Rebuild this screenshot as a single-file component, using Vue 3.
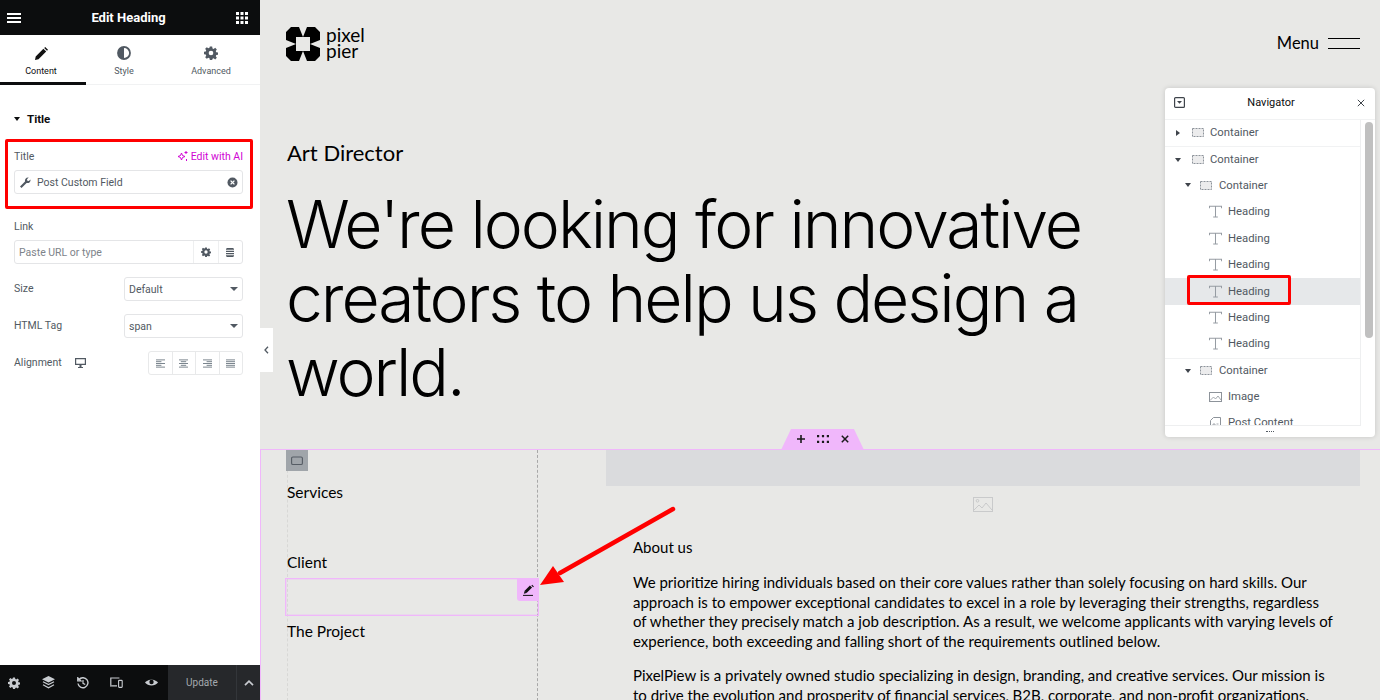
<template>
  <div class="page">
    <aside class="panel">
      <div class="topbar">
        <svg class="top-icon" width="14" height="12" viewBox="0 0 14 12"><path d="M0 1h14v2H0zM0 5h14v2H0zM0 9h14v2H0z" fill="#fff" /></svg>
        <span class="top-title">Edit Heading</span>
        <svg class="top-icon" width="12" height="12" viewBox="0 0 12 12"><path d="M0 0h3v3H0zM4.500 0h3v3h-3zM9 0h3v3H9zM0 4.500h3v3H0zM4.500 4.500h3v3h-3zM9 4.500h3v3H9zM0 9h3v3H0zM4.500 9h3v3h-3zM9 9h3v3H9z" fill="#fff" /></svg>
      </div>

      <div class="tabs">
        <div class="tab tab-active">
          <svg width="13" height="13" viewBox="0 0 13 13"><path d="M0 13l.7-3.500L8.400 1.800l2.800 2.800-7.700 7.700zM9.200 1l1-1 2.800 2.800-1 1z" fill="#111" /></svg>
          <span>Content</span>
        </div>
        <div class="tab tab-style">
          <svg width="14" height="14" viewBox="0 0 14 14"><circle cx="7" cy="7" r="6" fill="none" stroke="#515962" stroke-width="1.800" /><path d="M7 1a6 6 0 0 0 0 12z" fill="#515962" /></svg>
          <span>Style</span>
        </div>
        <div class="tab tab-adv">
          <svg width="14" height="14" viewBox="0 0 24 24"><path :d="gearPath" fill="#515962" fill-rule="evenodd" /></svg>
          <span>Advanced</span>
        </div>
      </div>

      <div class="controls">
        <div class="section-title"><span class="caret"></span>Title</div>

        <div class="title-box">
          <div class="label-row">
            <span class="label">Title</span>
            <span class="ai">
              <svg width="11" height="11" viewBox="0 0 11 11"><path d="M4.500 2l1 2.500L8 5.500l-2.500 1-1 2.500-1-2.500L1 5.500l2.500-1z" fill="none" stroke="#d004d4" stroke-width="1" /><path d="M8.500 0h1v1h1v1h-1v1h-1V2h-1V1h1zM9 8h1v2H9z" fill="#d004d4" /></svg>
              Edit with AI
            </span>
          </div>
          <div class="input dyn">
            <svg width="11" height="11" viewBox="0 0 11 11"><path d="M0 9.600L5 4.600C4.500 2.500 6.200.2 8.700.6L7 2.300l.3 1.500 1.500.3L10.500 2.400c.4 2.500-1.800 4.100-3.900 3.600L1.500 11z" fill="#515962" /></svg>
            <span>Post Custom Field</span>
            <svg class="clear" width="11" height="11" viewBox="0 0 11 11"><circle cx="5.500" cy="5.500" r="5" fill="#515962" /><path d="M3.600 3.600l3.800 3.800M7.400 3.600L3.600 7.400" stroke="#fff" stroke-width="1.300" /></svg>
          </div>
        </div>

        <div class="label link-label">Link</div>
        <div class="input link-input">
          <span class="placeholder">Paste URL or type</span>
          <span class="addon">
            <svg width="10" height="10" viewBox="0 0 24 24"><path :d="gearPath" fill="#515962" fill-rule="evenodd" /></svg>
          </span>
          <span class="addon">
            <svg width="8" height="9" viewBox="0 0 9 10"><path d="M1 0h7l1 1v1H0V1zM0 3h9v1.500H0zM0 5.500h9V7H0zM0 8h9v1l-1 1H1L0 9z" fill="#515962" /></svg>
          </span>
        </div>

        <div class="row">
          <span class="label">Size</span>
          <div class="select">Default<span class="select-caret"></span></div>
        </div>
        <div class="row">
          <span class="label">HTML Tag</span>
          <div class="select">span<span class="select-caret"></span></div>
        </div>
        <div class="row">
          <span class="label align-label">
            Alignment
            <svg width="11" height="10" viewBox="0 0 11 10"><path d="M.6.600h9.800v5.800H.6z" fill="none" stroke="#515962" stroke-width="1.200" /><path d="M4.500 7h2v2H8v1H3V9h1.500z" fill="#515962" /></svg>
          </span>
          <div class="aligns">
            <span v-for="a in aligns" :key="a.key" class="align-btn">
              <svg width="9" height="9" viewBox="0 0 10 9">
                <path v-for="(w, i) in a.bars" :key="i" :d="alignBar(w, a.key, i)" fill="#6d7882" />
              </svg>
            </span>
          </div>
        </div>
      </div>

      <div class="footer">
        <div class="foot-icons">
          <svg width="12" height="12" viewBox="0 0 24 24"><path :d="gearPath" fill="#c8cbd0" fill-rule="evenodd" /></svg>
          <svg width="13" height="13" viewBox="0 0 13 13"><path d="M6.500 0L13 3.200 6.500 6.500 0 3.200z" fill="#c8cbd0" /><path d="M1 5.800l5.500 2.800L12 5.800M1 8.800l5.500 2.900L12 8.800" fill="none" stroke="#c8cbd0" stroke-width="1.200" /></svg>
          <svg width="12" height="12" viewBox="0 0 12 12"><path d="M2 2.600A5 5 0 1 1 1 6.500" fill="none" stroke="#c8cbd0" stroke-width="1.400" /><path d="M.7 .6v3.300H4zM6 3v3.300l2.200 1.300" fill="none" stroke="#c8cbd0" stroke-width="1.200" /></svg>
          <svg width="13" height="11" viewBox="0 0 13 11"><path d="M.8 8V1h8.600M0 8.800h7" fill="none" stroke="#c8cbd0" stroke-width="1.200" /><rect x="8.600" y="3.400" width="3.600" height="7" rx=".6" fill="none" stroke="#c8cbd0" stroke-width="1.100" /></svg>
          <svg width="13" height="9" viewBox="0 0 13 9"><path d="M0 4.500C3 .5 10 .5 13 4.500 10 8.500 3 8.500 0 4.500z" fill="#c8cbd0" /><circle cx="6.500" cy="4" r="2.200" fill="#0c0d0e" /><path d="M1.500 2.800Q6.500-.8 11.500 2.800" fill="none" stroke="#0c0d0e" stroke-width=".6" /></svg>
        </div>
        <div class="update">Update</div>
        <div class="foot-more">
          <svg width="10" height="6" viewBox="0 0 10 6"><path d="M1 5.200l4-4 4 4" fill="none" stroke="#c8cbd0" stroke-width="1.700" /></svg>
        </div>
      </div>

      <div class="collapse">
        <svg width="5" height="8" viewBox="0 0 5 8"><path d="M4 .8L1 4l3 3.200" fill="none" stroke="#515962" stroke-width="1.300" /></svg>
      </div>
    </aside>

    <main class="canvas">
      <header class="site-head">
        <div class="logo">
          <svg width="34" height="34" viewBox="0 0 34 34">
            <path fill="#000" d="M5 0h8l4 10 4-10h8l5 5v8l-10 4 10 4v8l-5 5h-8l-4-10-4 10H5l-5-5v-8l10-4-10-4V5z" />
            <rect x="10" y="10" width="14" height="14" fill="#e8e8e6" />
          </svg>
          <span class="logo-text">pixel<br />pier</span>
        </div>
        <div class="menu">
          <span>Menu</span>
          <span class="burger"></span>
        </div>
      </header>

      <section class="hero">
        <div class="role">Art Director</div>
        <h1>We're looking for innovative<br />creators to help us design a<br />world.</h1>
      </section>

      <section class="lower">
        <div class="handle">
          <svg width="8" height="8" viewBox="0 0 8 8"><path d="M3.200 0h1.600v3.200H8v1.600H4.800V8H3.200V4.800H0V3.200h3.200z" fill="#1a1a1a" /></svg>
          <svg width="12" height="8" viewBox="0 0 12 8"><path d="M0 0h2.200v2.200H0zM4.900 0h2.200v2.200H4.900zM9.800 0H12v2.200H9.800zM0 5.800h2.200V8H0zM4.900 5.800h2.200V8H4.900zM9.800 5.800H12V8H9.800z" fill="#1a1a1a" /></svg>
          <svg width="8" height="8" viewBox="0 0 8 8"><path d="M.8.800l6.400 6.400M7.200.800L.8 7.200" stroke="#1a1a1a" stroke-width="1.500" /></svg>
        </div>

        <div class="col-left">
          <span class="col-badge">
            <svg width="12" height="10" viewBox="0 0 12 10"><rect x=".6" y="1" width="10.800" height="7.500" rx="1.300" fill="none" stroke="#555c64" stroke-width="1.100" /></svg>
          </span>
          <div class="meta meta-services">Services</div>
          <div class="meta meta-client">Client</div>
          <div class="selected">
            <span class="edit-btn">
              <svg width="11" height="12" viewBox="0 0 11 12"><path d="M2.500 8L8 2.500" stroke="#111" stroke-width="3" /><path d="M.8 9.800l.9-2.700 1.800 1.800zM8.400 1.500L9.200.7l1.700 1.700-.8.800z" fill="#111" /><path d="M0 11.400h10" stroke="#111" stroke-width="1" /></svg>
            </span>
          </div>
          <div class="meta meta-project">The Project</div>
        </div>

        <div class="col-right">
          <div class="img-bar"></div>
          <div class="img-holder">
            <svg width="20" height="15" viewBox="0 0 20 15"><rect x=".5" y=".5" width="19" height="14" fill="none" stroke="#c9cacb" /><circle cx="4.500" cy="3.800" r="1.300" fill="none" stroke="#c9cacb" /><path d="M1 13l5-5 3 3 4-5 6 7" fill="none" stroke="#c9cacb" /></svg>
          </div>
          <div class="about">
            <h2>About us</h2>
            <p>We prioritize hiring individuals based on their core values rather than solely focusing on hard skills. Our<br />approach is to empower exceptional candidates to excel in a role by leveraging their strengths, regardless<br />of whether they precisely match a job description. As a result, we welcome applicants with varying levels of<br />experience, both exceeding and falling short of the requirements outlined below.</p>
            <p>PixelPiew is a privately owned studio specializing in design, branding, and creative services. Our mission is<br />to drive the evolution and prosperity of financial services, B2B, corporate, and non-profit organizations.</p>
          </div>
        </div>
      </section>

      <div class="navigator">
        <div class="nav-head">
          <svg width="11" height="11" viewBox="0 0 11 11"><rect x=".6" y=".6" width="9.800" height="9.800" rx="1" fill="none" stroke="#3f444b" stroke-width="1.200" /><path d="M3 4h5L5.500 6.800z" fill="#3f444b" /></svg>
          <span>Navigator</span>
          <svg width="8" height="8" viewBox="0 0 8 8"><path d="M.8.800l6.400 6.400M7.200.800L.8 7.200" stroke="#3f444b" stroke-width="1" /></svg>
        </div>
        <div class="nav-body">
          <div class="nav-list">
            <div
              v-for="(item, i) in navItems"
              :key="i"
              class="nav-row"
              :class="{ 'nav-active': item.active, 'nav-sep': item.sep, 'nav-nested': item.indent === 20 }"
              :style="{ paddingLeft: item.indent + 'px' }"
            >
              <span v-if="item.arrow" class="nav-arrow" :class="item.arrow"></span>
              <svg v-if="item.type === 'box'" class="nav-icon" width="12" height="9" viewBox="0 0 12 9"><rect x=".5" y=".5" width="11" height="8" fill="#ececed" stroke="#8d939a" stroke-dasharray="2 1" /></svg>
              <svg v-else-if="item.type === 'text'" class="nav-icon" width="13" height="13" viewBox="0 0 14 13"><path d="M.5 3V.8h13V3M7 .8v11.700M4.500 12.500h5" fill="none" stroke="#969ca3" stroke-width="1.100" /></svg>
              <svg v-else-if="item.type === 'image'" class="nav-icon" width="13" height="10" viewBox="0 0 13 10"><rect x=".5" y=".5" width="12" height="9" fill="none" stroke="#8d939a" /><path d="M1 8.500L4.500 5l2 2L9 4l3 4" fill="none" stroke="#8d939a" stroke-width=".8" /></svg>
              <svg v-else class="nav-icon" width="13" height="12" viewBox="0 0 11 12"><path d="M3.500.5h7v11H.5V3.500z" fill="none" stroke="#8d939a" /><path d="M3 7h2v2H3zM6.500 7h2M6.500 9h2" stroke="#8d939a" stroke-width=".8" fill="none" /></svg>
              <span>{{ item.label }}</span>
              <span v-if="item.active" class="nav-mark"></span>
            </div>
          </div>
          <div class="nav-track"><span class="nav-thumb"></span></div>
        </div>
        <div class="nav-foot"><span class="nav-grip"></span></div>
      </div>

      <svg class="arrow" width="150" height="90" viewBox="0 0 150 90">
        <path d="M133 4L20 68" stroke="#f00" stroke-width="4.500" stroke-linecap="round" />
        <path d="M0 80L13 61 24 77z" fill="#f00" />
      </svg>
    </main>
  </div>
</template>

<script setup>
const gearPath =
  'M10 1h4l.6 3.200 1.900.8 2.700-1.800 2.800 2.800L20.200 8.700l.8 1.900 3 .4v4l-3 .6-.8 1.900 1.800 2.700-2.800 2.800-2.700-1.800-1.900.8L14 24h-4l-.6-3-1.900-.8L4.800 22 2 19.200l1.800-2.700-.8-1.900L0 14v-4l3-.6.8-1.900L2 4.800 4.800 2l2.700 1.800 1.900-.8zM12 8a4 4 0 1 0 0 8 4 4 0 0 0 0-8z'

const aligns = [
  { key: 'left', bars: [10, 6, 10, 6, 10] },
  { key: 'center', bars: [10, 6, 10, 6, 10] },
  { key: 'right', bars: [10, 6, 10, 6, 10] },
  { key: 'justify', bars: [10, 10, 10, 10, 10] },
]

function alignBar(w, key, i) {
  const y = i * 2
  let x = 0
  if (key === 'center') x = (10 - w) / 2
  if (key === 'right') x = 10 - w
  return `M${x} ${y}h${w}v1h-${w}z`
}

const navItems = [
  { label: 'Container', type: 'box', indent: 11, arrow: 'right' },
  { label: 'Container', type: 'box', indent: 10, arrow: 'down', sep: true },
  { label: 'Container', type: 'box', indent: 20, arrow: 'down' },
  { label: 'Heading', type: 'text', indent: 44 },
  { label: 'Heading', type: 'text', indent: 44 },
  { label: 'Heading', type: 'text', indent: 44 },
  { label: 'Heading', type: 'text', indent: 44, active: true },
  { label: 'Heading', type: 'text', indent: 44 },
  { label: 'Heading', type: 'text', indent: 44 },
  { label: 'Container', type: 'box', indent: 20, arrow: 'down', sep: true },
  { label: 'Image', type: 'image', indent: 44 },
  { label: 'Post Content', type: 'post', indent: 44 },
]
</script>

<style>
html,
body {
  margin: 0;
  overflow: hidden;
}
</style>

<style scoped>
.page {
  display: flex;
  width: 1380px;
  height: 700px;
  overflow: hidden;
  font-family: 'Roboto', 'Liberation Sans', sans-serif;
  background: #e8e8e6;
}

/* left editor panel */
.panel {
  position: relative;
  flex: 0 0 260px;
  min-width: 0;
  display: flex;
  flex-direction: column;
  background: #fff;
}

.topbar {
  display: flex;
  align-items: center;
  justify-content: space-between;
  height: 35px;
  padding: 0 12px 0 7px;
  background: #0c0d0e;
  color: #fff;
}

.top-title {
  font-size: 13px;
  font-weight: 700;
}

.tabs {
  display: flex;
  height: 50px;
  border-bottom: 1px solid #f1f2f3;
  box-sizing: border-box;
}

.tab {
  display: flex;
  flex-direction: column;
  align-items: center;
  justify-content: flex-end;
  gap: 6px;
  padding-bottom: 8px;
  box-sizing: border-box;
  font-size: 9px;
  color: #515962;
}

.tab-active {
  width: 86px;
  height: 50px;
  padding-right: 4px;
  padding-bottom: 9px;
  color: #0c0d0e;
  box-shadow: inset 0 -3px 0 #0c0d0e;
}

.tab-style {
  width: 76px;
}

.tab-adv {
  width: 98px;
}

.controls {
  flex: 1;
  min-width: 0;
  padding: 0 17px 0 14px;
}

.section-title {
  display: flex;
  align-items: center;
  gap: 7px;
  margin-top: 27px;
  height: 14px;
  font-size: 11.500px;
  font-weight: 700;
  color: #0c0d0e;
}

.caret {
  width: 0;
  height: 0;
  border: 3.500px solid transparent;
  border-top: 4px solid #0c0d0e;
  border-bottom: 0;
}

.title-box {
  margin: 13px -10px 0 -9px;
  width: 248px;
  height: 70px;
  box-sizing: border-box;
  border: 3px solid #f00;
  border-radius: 2px;
  padding: 7px 7px 0 6px;
}

.label-row {
  display: flex;
  justify-content: space-between;
  align-items: center;
  height: 14px;
}

.label {
  font-size: 10.500px;
  color: #515962;
}

.ai {
  display: flex;
  align-items: center;
  gap: 3px;
  font-size: 10.500px;
  color: #d004d4;
}

.input {
  display: flex;
  align-items: center;
  height: 24px;
  box-sizing: border-box;
  border: 1px solid #e4e5e7;
  border-radius: 3px;
  font-size: 10.500px;
  color: #515962;
}

.dyn {
  margin-top: 7px;
  padding: 0 4px 0 5px;
  gap: 6px;
}

.clear {
  margin-left: auto;
}

.link-label {
  margin-top: 11px;
  height: 14px;
  line-height: 14px;
}

.link-input {
  margin-top: 6px;
}

.placeholder {
  flex: 1;
  padding-left: 4px;
  color: #7d838a;
}

.addon {
  display: flex;
  align-items: center;
  justify-content: center;
  width: 24.500px;
  height: 100%;
  border-left: 1px solid #eeeff0;
  box-sizing: border-box;
}

.row {
  display: flex;
  align-items: center;
  justify-content: space-between;
  height: 24px;
  margin-top: 13px;
}

.row .label {
  margin-top: -1px;
}

.select {
  position: relative;
  width: 119px;
  height: 24px;
  box-sizing: border-box;
  padding-left: 4px;
  line-height: 23px;
  border: 1px solid #e4e5e7;
  border-radius: 3px;
  font-size: 10.500px;
  color: #515962;
}

.select-caret {
  position: absolute;
  right: 4px;
  top: 9px;
  border: 4px solid transparent;
  border-top: 4px solid #515962;
  border-bottom: 0;
}

.align-label {
  display: flex;
  align-items: center;
  gap: 13px;
}

.aligns {
  display: flex;
  width: 95px;
  height: 24px;
  box-sizing: border-box;
  border: 1px solid #e8e9ea;
  border-radius: 3px;
}

.align-btn {
  flex: 1;
  display: flex;
  align-items: center;
  justify-content: center;
  border-left: 1px solid #e8e9ea;
}

.align-btn:first-child {
  border-left: 0;
}

.footer {
  display: flex;
  height: 35px;
  background: #0c0d0e;
  box-sizing: border-box;
}

.foot-icons {
  flex: 0 0 168px;
  display: flex;
  align-items: center;
  justify-content: space-between;
  box-sizing: border-box;
  padding: 0 10px 0 8px;
}

.update {
  flex: 0 0 68px;
  display: flex;
  align-items: center;
  justify-content: center;
  background: #26282b;
  color: #a4a9ae;
  font-size: 10px;
}

.foot-more {
  flex: 1;
  display: flex;
  align-items: center;
  justify-content: center;
  background: #26282b;
  border-left: 1px solid #33363a;
}

.collapse {
  position: absolute;
  left: 260px;
  top: 328px;
  display: flex;
  align-items: center;
  justify-content: center;
  width: 13px;
  height: 44px;
  background: #fff;
}

/* page preview */
.canvas {
  position: relative;
  flex: 1;
  min-width: 0;
  color: #000;
  font-family: 'Lato', 'Liberation Sans', sans-serif;
}

.site-head {
  display: flex;
  justify-content: space-between;
  padding: 27px 20px 0 26px;
  height: 33px;
}

.logo {
  display: flex;
  align-items: center;
  gap: 6px;
}

.logo-text {
  margin-top: -2px;
  font-size: 19px;
  line-height: 16px;
  font-weight: 400;
}

.menu {
  display: flex;
  align-items: center;
  gap: 9px;
  font-size: 16.500px;
  height: 32px;
}

.burger {
  display: block;
  width: 32px;
  height: 9px;
  border-top: 1.500px solid #000;
  border-bottom: 1.500px solid #000;
}

.hero {
  padding: 80px 0 0 27px;
  height: 389px;
  box-sizing: border-box;
}

.role {
  font-size: 22px;
  line-height: 26px;
  font-weight: 400;
}

h1 {
  margin: 21px 0 0 -1px;
  font-family: 'Inter', 'Liberation Sans', sans-serif;
  font-size: 66px;
  line-height: 74px;
  font-weight: 300;
  letter-spacing: -2.050px;
  white-space: nowrap;
}

.lower {
  position: relative;
  display: flex;
  border-top: 1px solid #f0b7fb;
  border-left: 1px solid #f0b7fb;
  height: 251px;
}

.handle {
  position: absolute;
  left: 520px;
  top: -21px;
  display: flex;
  align-items: center;
  justify-content: center;
  gap: 12px;
  width: 83px;
  height: 21px;
  padding-bottom: 2px;
  box-sizing: border-box;
  background: #f0b7fb;
  clip-path: polygon(10px 0, 73px 0, 83px 100%, 0 100%);
}

.col-left {
  position: relative;
  width: 251px;
  margin-left: 26px;
  border-left: 1px dashed #d8d8d6;
  border-right: 1px dashed #a8a8a8;
  box-sizing: border-box;
}

.col-badge {
  position: absolute;
  left: -2px;
  top: 0;
  display: flex;
  align-items: center;
  justify-content: center;
  width: 22px;
  height: 21px;
  background: #a0a5aa;
}

.meta {
  margin-left: -1px;
  font-size: 15.500px;
  line-height: 20px;
}

.meta-services {
  margin-top: 32px;
}

.meta-client {
  margin-top: 50px;
}

.selected {
  position: relative;
  margin: 6px -2px 0 -3px;
  height: 38px;
  box-sizing: border-box;
  border: 1px solid #f0b7fb;
  box-shadow: inset 0 0 0 1px #f0b7fb55;
}

.edit-btn {
  position: absolute;
  right: -1px;
  top: -1px;
  display: flex;
  align-items: center;
  justify-content: center;
  width: 22px;
  height: 23px;
  background: #f0b7fb;
  border-radius: 0 0 0 3px;
}

.meta-project {
  margin-top: 5px;
}

.col-right {
  margin-left: 68px;
  width: 754px;
}

.img-bar {
  height: 36px;
  background: #dadbdd;
}

.img-holder {
  display: flex;
  justify-content: center;
  margin-top: 11px;
  height: 15px;
}

.about {
  padding: 0 20px 0 27px;
}

h2 {
  margin: 24px 0 0;
  font-size: 15px;
  line-height: 22px;
  font-weight: 400;
}

p {
  margin: 15px 0 0;
  font-size: 15px;
  line-height: 19.700px;
  white-space: nowrap;
}

.about p:last-child {
  margin-top: 14px;
}

/* floating navigator */
.navigator {
  position: absolute;
  left: 905px;
  top: 88px;
  width: 210px;
  height: 349px;
  display: flex;
  flex-direction: column;
  background: #fff;
  border-radius: 4px;
  box-shadow: 0 0 5px rgba(0, 0, 0, 0.15);
  font-family: 'Roboto', 'Liberation Sans', sans-serif;
}

.nav-head {
  display: flex;
  align-items: center;
  justify-content: space-between;
  height: 29px;
  padding: 0 10px 2px 9px;
  flex: none;
  border-bottom: 1px solid #f1f2f3;
  font-size: 11px;
  color: #0c0d0e;
}

.nav-body {
  flex: 1;
  display: flex;
  min-height: 0;
}

.nav-list {
  width: 195px;
  overflow: hidden;
  border-right: 1px solid #eeeff0;
  border-bottom: 1px solid #eeeff0;
}

.nav-row {
  position: relative;
  display: flex;
  align-items: center;
  height: 26.400px;
  box-sizing: border-box;
  padding-bottom: 1px;
  font-size: 11.300px;
  color: #515962;
}

.nav-sep {
  border-top: 1px solid #f1f2f3;
}

.nav-active {
  background: #e6e8ea;
}

.nav-arrow {
  width: 0;
  height: 0;
}

.nav-arrow.down {
  margin-right: 11px;
  border: 3.500px solid transparent;
  border-top: 4px solid #3f444b;
  border-bottom: 0;
}

.nav-arrow.right {
  margin-right: 12px;
  border: 3.500px solid transparent;
  border-left: 4px solid #3f444b;
  border-right: 0;
}

.nav-nested .nav-arrow.down {
  margin-right: 9px;
}

.nav-nested .nav-icon {
  margin-right: 7px;
}

.nav-icon {
  margin-right: 6px;
}

.nav-mark {
  position: absolute;
  left: 22px;
  top: -3px;
  width: 104px;
  height: 30px;
  box-sizing: border-box;
  border: 3px solid #f00;
  border-radius: 2px;
}

.nav-track {
  flex: 1;
  padding: 2px 0 0 4px;
}

.nav-thumb {
  display: block;
  width: 8px;
  height: 216px;
  background: #c0c0c0;
  border-radius: 4px;
}

.nav-foot {
  position: relative;
  height: 11px;
  flex: none;
}

.nav-grip {
  position: absolute;
  left: 101px;
  top: 5px;
  width: 8px;
  height: 1px;
  border-top: 1px dotted #515962;
}

.arrow {
  position: absolute;
  left: 280px;
  top: 505px;
}
</style>
